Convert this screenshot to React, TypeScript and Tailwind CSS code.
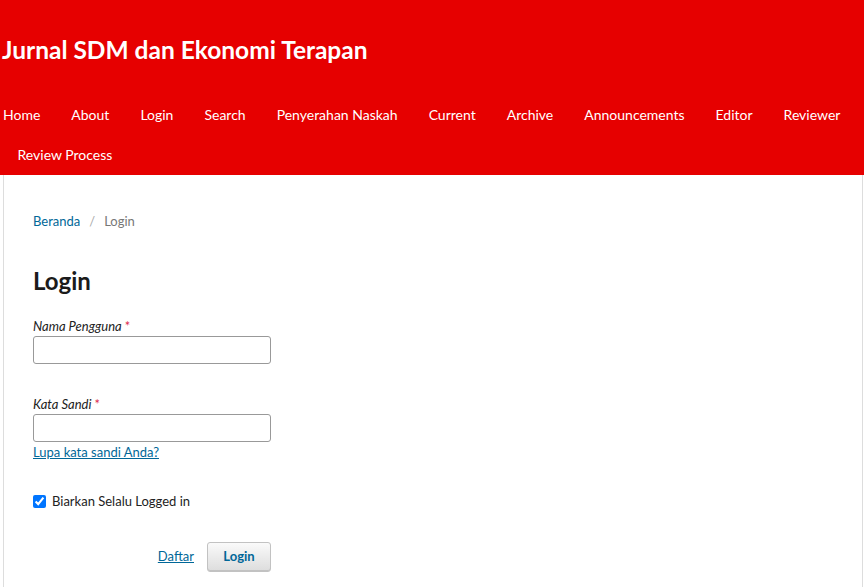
import React from 'react'

const navItems = [
  'Home',
  'About',
  'Login',
  'Search',
  'Penyerahan Naskah',
  'Current',
  'Archive',
  'Announcements',
  'Editor',
  'Reviewer',
  'Review Process',
]

export default function App() {
  return (
    <div className="min-h-[587px] bg-white font-['Lato','Noto_Sans',sans-serif] text-[13px] text-[#222]">
      {/* Header */}
      <header className="bg-[#e60000] text-white">
        <div className="pl-[2px] pt-[35px] pb-[30px] text-[24.5px] font-bold leading-[30px]">
          Jurnal SDM dan Ekonomi Terapan
        </div>
        <ul className="flex flex-wrap pl-[2px] text-[14px]">
          {navItems.map((item, i) => (
            <li key={item}>
              <a
                href="#"
                className={`block leading-[40px] px-[8px] text-white ${i === 0 ? '-ml-[7px] mr-[7.5px]' : 'mx-[7.5px]'}`}
              >
                {item}
              </a>
            </li>
          ))}
        </ul>
      </header>

      {/* Main */}
      <main className="ml-[3px] mr-[1px] min-h-[412px] border-x border-[#ddd] pl-[29px] pt-[36px] pb-[20px]">
        <nav className="flex items-center leading-[20px]">
          <a href="#" className="text-[#006798]">Beranda</a>
          <span className="mx-[9px] text-[#aaa]">/</span>
          <span className="text-[#777]">Login</span>
        </nav>

        <h1 className="mt-[32px] text-[24px] font-bold leading-[36px] text-[#1b1b1b]">Login</h1>

        <form className="mt-[17px] w-[238px]">
          <label className="block italic leading-[20px]">
            Nama Pengguna <span className="not-italic text-[#dd2a4a]">*</span>
          </label>
          <input
            type="text"
            className="block h-[28px] w-[238px] rounded-[3px] border border-[#999] bg-white"
          />

          <label className="mt-[30px] block italic leading-[20px]">
            Kata Sandi <span className="not-italic text-[#dd2a4a]">*</span>
          </label>
          <input
            type="password"
            className="block h-[28px] w-[238px] rounded-[3px] border border-[#999] bg-white"
          />
          <a href="#" className="block leading-[20px] text-[#006798] underline">
            Lupa kata sandi Anda?
          </a>

          <label className="mt-[29px] flex items-center leading-[20px]">
            <input type="checkbox" defaultChecked className="m-0 h-[13px] w-[13px]" />
            <span className="ml-[6px]">Biarkan Selalu Logged in</span>
          </label>

          <div className="mt-[31px] flex items-center justify-end">
            <a href="#" className="mr-[13px] text-[#006798] underline">Daftar</a>
            <button
              type="button"
              className="h-[30px] w-[64px] rounded-[3px] border border-[#c2c2c2] bg-gradient-to-b from-[#fafafa] to-[#ddd] font-bold text-[#006798] shadow-[inset_0_-1px_0_#c2c2c2]"
            >
              Login
            </button>
          </div>
        </form>
      </main>
    </div>
  )
}
